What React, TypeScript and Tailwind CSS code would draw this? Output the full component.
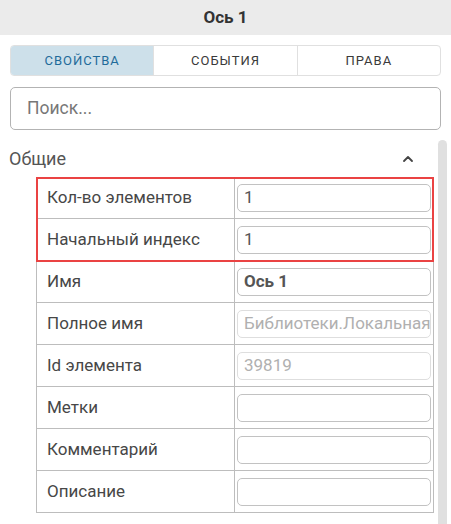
import { ChevronUp } from 'lucide-react'

type Field = {
  label: string
  value?: string
  bold?: boolean
  disabled?: boolean
}

const marked: Field[] = [
  { label: 'Кол-во элементов', value: '1' },
  { label: 'Начальный индекс', value: '1' },
]

const common: Field[] = [
  { label: 'Имя', value: 'Ось 1', bold: true },
  { label: 'Полное имя', value: 'Библиотеки.Локальная библиотека.Ось 1', disabled: true },
  { label: 'Id элемента', value: '39819', disabled: true },
  { label: 'Метки' },
  { label: 'Комментарий' },
  { label: 'Описание' },
]

function Row({ field }: { field: Field }) {
  return (
    <div className="flex h-[42px] border-b border-[#bdbdbd]">
      <div className="w-[198px] shrink-0 border-r border-[#bdbdbd] pl-[10px] flex items-center text-[17px] text-[#474747]">
        {field.label}
      </div>
      <div className="flex-1 min-w-0 px-[2px] flex items-center">
        <div
          className={`h-[28px] w-full min-w-0 rounded-[5px] border px-[6px] flex items-center overflow-hidden whitespace-nowrap text-[17px] ${
            field.disabled ? 'border-[#dedede] text-[#b0b0b0]' : 'border-[#c2c2c2] text-[#555]'
          } ${field.bold ? 'font-bold text-[#333]' : ''}`}
        >
          {field.value}
        </div>
      </div>
    </div>
  )
}

export default function App() {
  const tabs = ['Свойства', 'События', 'Права']

  return (
    <div className="w-[451px] h-[524px] overflow-hidden bg-white flex flex-col" style={{ fontFamily: 'Roboto, "Noto Sans", sans-serif' }}>
      {/* Title */}
      <div className="h-[35px] shrink-0 bg-[#ebebeb] flex items-center justify-center text-[17px] font-bold text-[#333]">
        Ось 1
      </div>

      {/* Tabs */}
      <div className="mx-[10px] mt-[10px] h-[31px] shrink-0 flex rounded-[4px] border border-[#e0e0e0] overflow-hidden">
        {tabs.map((t, i) => (
          <div
            key={t}
            className={`flex-1 flex items-center justify-center text-[13px] uppercase tracking-[1px] ${
              i === 0 ? 'bg-[#cde0ea] text-[#1f6b9a]' : 'text-[#3a3a3a] border-l border-[#e0e0e0]'
            }`}
          >
            {t}
          </div>
        ))}
      </div>

      {/* Search */}
      <div className="mx-[10px] mt-[11px] h-[43px] shrink-0 rounded-[5px] border border-[#b3b3b3] flex items-center pl-[16px] text-[17.5px] text-[#777]">
        Поиск...
      </div>

      {/* Properties */}
      <div className="mt-[10px] flex-1 flex min-h-0">
        <div className="flex-1 min-w-0">
          <div className="h-[37px] flex items-center justify-between pl-[9px] pr-[22px] text-[18px] text-[#555]">
            <span>Общие</span>
            <ChevronUp className="w-[16px] h-[16px] text-[#444]" strokeWidth={2.75} />
          </div>
          <div className="ml-[36px] mr-[4px] border-l border-r border-[#bdbdbd]">
            <div className="relative">
              {marked.map((f) => (
                <Row key={f.label} field={f} />
              ))}
              <div className="absolute -left-px -right-px top-0 -bottom-px border-2 border-[#ea4343] pointer-events-none" />
            </div>
            {common.map((f) => (
              <Row key={f.label} field={f} />
            ))}
          </div>
        </div>
        <div className="w-[9px] mr-[4px] bg-[#e0e0e0] rounded-t-[5px]" />
      </div>
    </div>
  )
}
